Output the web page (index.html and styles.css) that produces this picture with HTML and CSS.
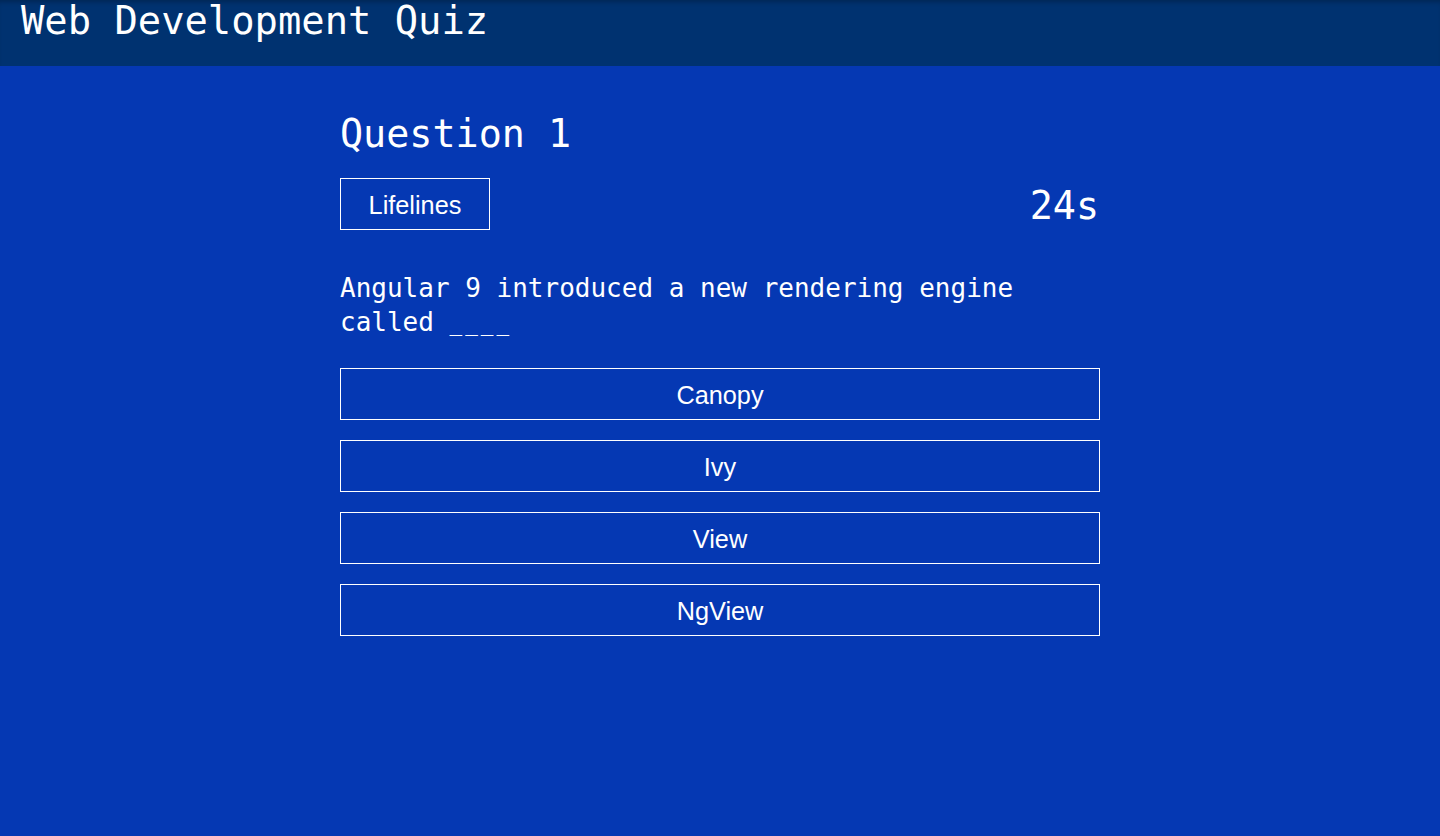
FILE: index.html
```html
<!DOCTYPE html>
<html lang="en">
<head>
<meta charset="utf-8">
<title>Web Development Quiz</title>
<link rel="stylesheet" href="styles.css">
</head>
<body>
<header class="topbar">
  <h1 class="brand">Web Development Quiz</h1>
</header>
<main class="quiz">
  <h2 class="question-title">Question 1</h2>
  <div class="toolbar">
    <button class="btn lifelines">Lifelines</button>
    <span class="timer">24s</span>
  </div>
  <p class="question-text">Angular 9 introduced a new rendering engine called <span class="blank">____</span></p>
  <div class="options">
    <button class="btn option">Canopy</button>
    <button class="btn option">Ivy</button>
    <button class="btn option">View</button>
    <button class="btn option">NgView</button>
  </div>
</main>
</body>
</html>
```

FILE: styles.css
```css
html, body {
  margin: 0;
  padding: 0;
}
body {
  background: #0538b3;
  color: #ffffff;
  font-family: "DejaVu Sans Mono", "Liberation Mono", monospace;
  min-height: 836px;
}
.topbar {
  height: 66px;
  background: #003270;
  box-shadow: inset 0 5px 5px -3px rgba(0, 0, 0, 0.25);
  padding: 1px 21px 0;
  box-sizing: border-box;
}
.brand {
  margin: 0;
  font-size: 38.8px;
  line-height: 40px;
  font-weight: normal;
}
.quiz {
  width: 760px;
  margin: 0 auto;
  padding-top: 45px;
}
.question-title {
  margin: 0;
  font-size: 38.4px;
  line-height: 46px;
  font-weight: normal;
}
.toolbar {
  margin-top: 21px;
  display: flex;
  justify-content: space-between;
  align-items: center;
}
.btn {
  background: transparent;
  color: #ffffff;
  border: 1px solid #ffffff;
  font-family: "Liberation Sans", Arial, sans-serif;
  font-size: 25.3px;
  height: 52px;
  padding: 2px 0 0;
  cursor: pointer;
}
.lifelines {
  width: 150px;
}
.timer {
  font-size: 38.4px;
  line-height: 46px;
  margin-right: 1px;
  padding-top: 3px;
}
.question-text {
  margin: 41px 0 0;
  font-size: 26px;
  line-height: 34px;
  width: 700px;
}
.blank {
  font-size: 21px;
  letter-spacing: 3px;
}
.options {
  margin-top: 27px;
  display: flex;
  flex-direction: column;
  gap: 20px;
}
.option {
  width: 760px;
}
```
